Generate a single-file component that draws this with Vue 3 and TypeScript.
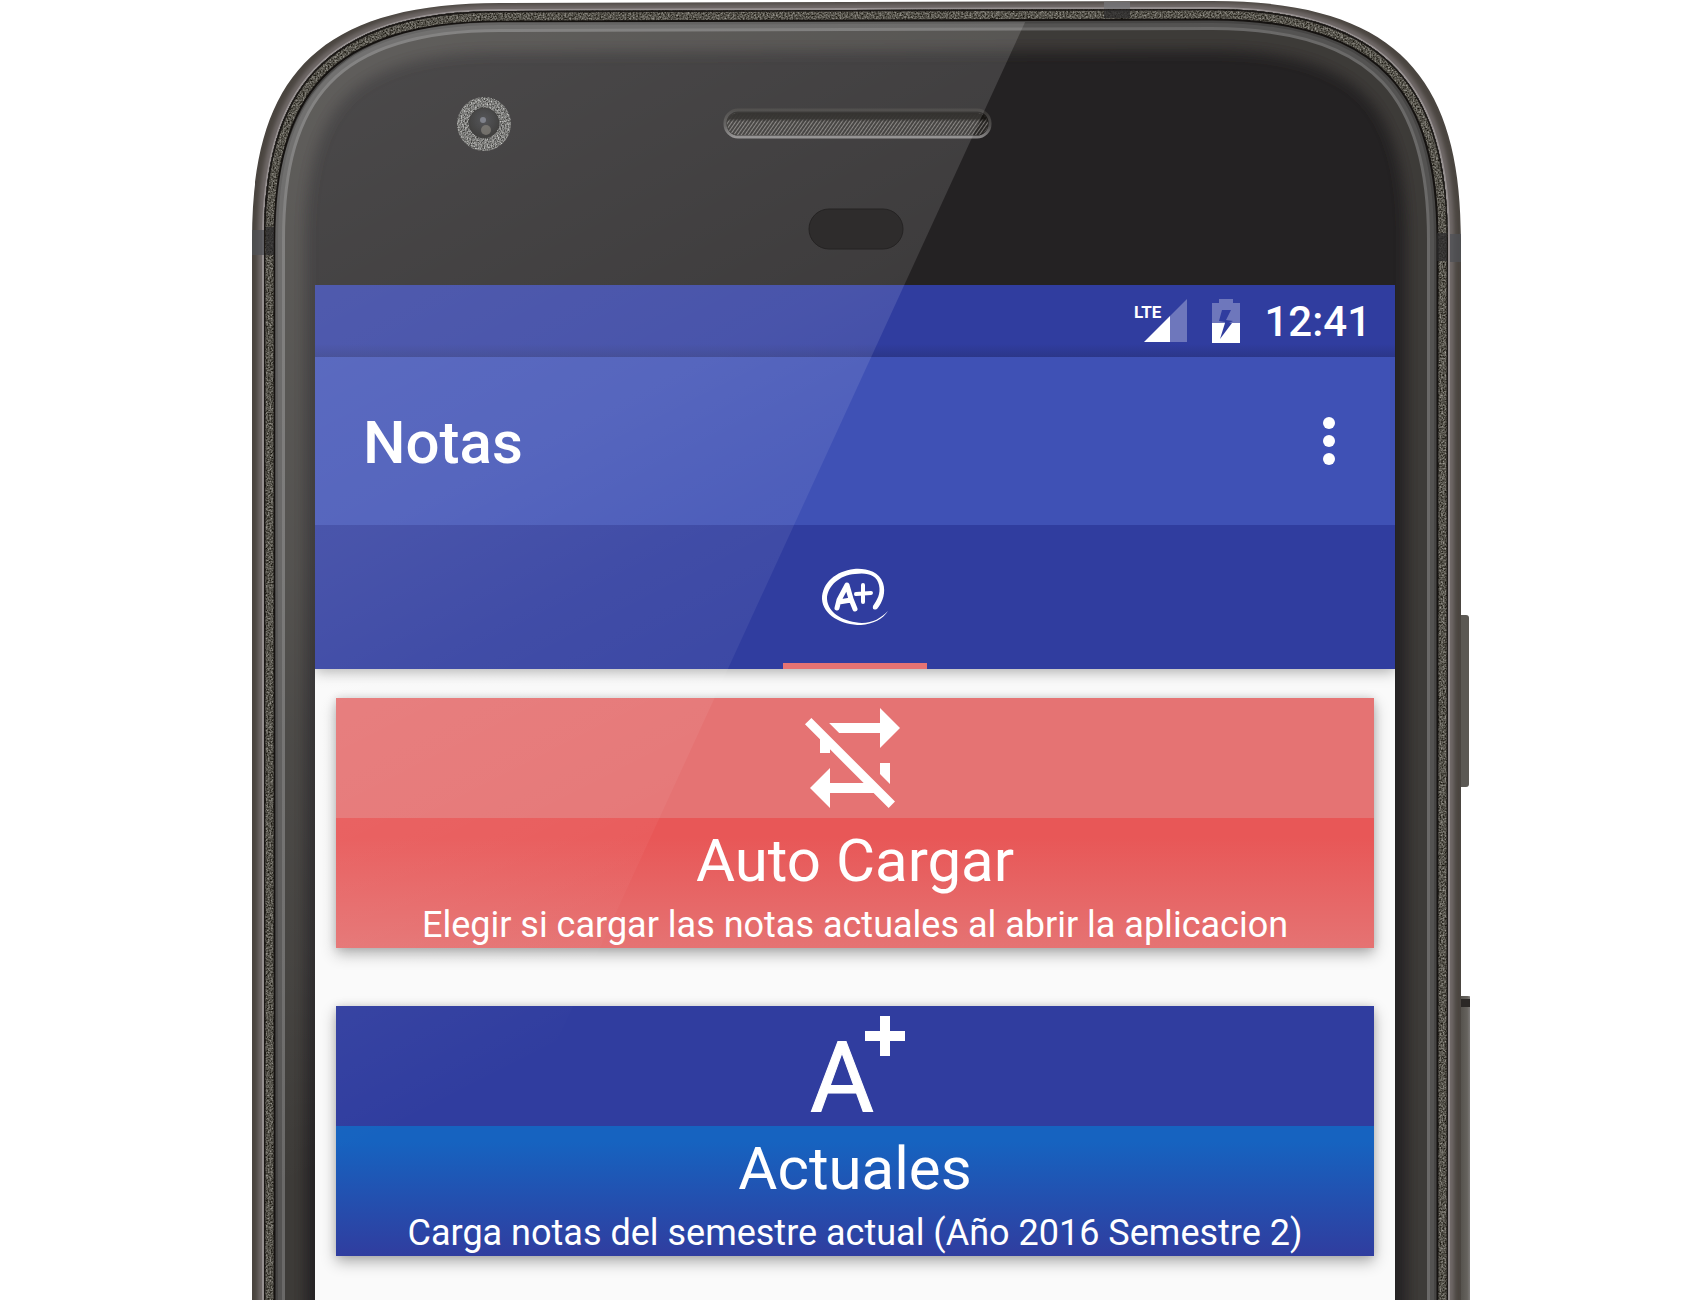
<script setup lang="ts">
interface Card {
  id: string
  title: string
  detail: string
  icon: 'repeat-off' | 'grade'
}

const cards: Card[] = [
  {
    id: 'auto',
    title: 'Auto Cargar',
    detail: 'Elegir si cargar las notas actuales al abrir la aplicacion',
    icon: 'repeat-off',
  },
  {
    id: 'current',
    title: 'Actuales',
    detail: 'Carga notas del semestre actual (Año 2016 Semestre 2)',
    icon: 'grade',
  },
]
</script>

<template>
  <div class="page">
    <div class="phone">
      <svg class="shell" viewBox="240 0 1230 1300" aria-hidden="true">
        <defs>
          <path id="outer" d="M252 1400V240C252 82 312 3 500 3L1213 1C1401 1 1461 82 1461 240V1400Z" />
          <path id="inner" d="M264 1400V240C264 92 322 11 500 11L1212 9C1390 9 1448 92 1448 240V1400Z" />
          <clipPath id="outerClip"><use href="#outer" /></clipPath>
          <clipPath id="innerClip"><use href="#inner" /></clipPath>
          <filter id="soft" x="-5%" y="-5%" width="110%" height="110%">
            <feGaussianBlur stdDeviation="2" />
          </filter>
          <filter id="glow" x="-5%" y="-5%" width="110%" height="110%">
            <feGaussianBlur stdDeviation="7" />
          </filter>
          <filter id="grain" x="0" y="0" width="100%" height="100%" color-interpolation-filters="sRGB">
            <feTurbulence type="fractalNoise" baseFrequency="0.6" numOctaves="2" seed="4" result="noise" />
            <feColorMatrix in="noise" type="matrix" values="0.8 0 0 0 -0.06  0.8 0 0 0 -0.07  0.8 0 0 0 -0.1  0 0 0 0 1" />
            <feComposite in2="SourceGraphic" operator="in" />
          </filter>
          <filter id="ringGrain" x="0" y="0" width="100%" height="100%" color-interpolation-filters="sRGB">
            <feTurbulence type="fractalNoise" baseFrequency="0.7" numOctaves="2" seed="9" result="noise" />
            <feColorMatrix in="noise" type="matrix" values="1.1 0 0 0 -0.15  1.1 0 0 0 -0.15  1.1 0 0 0 -0.16  0 0 0 0 1" />
            <feComposite in2="SourceGraphic" operator="in" />
          </filter>
          <pattern id="mesh" width="3" height="3" patternUnits="userSpaceOnUse" patternTransform="rotate(35)">
            <rect width="3" height="3" fill="#2a2826" />
            <rect width="1" height="3" fill="#7a7774" />
          </pattern>
          <linearGradient id="meshShade" x1="0" y1="0" x2="0" y2="1">
            <stop offset="0" stop-color="#14120f" />
            <stop offset="0.25" stop-color="#14120f" stop-opacity="0.9" />
            <stop offset="0.4" stop-color="#14120f" stop-opacity="0" />
          </linearGradient>
          <linearGradient id="speakerRim" x1="0" y1="0" x2="0" y2="1">
            <stop offset="0" stop-color="#353331" />
            <stop offset="0.6" stop-color="#504e4d" />
            <stop offset="1" stop-color="#858383" />
          </linearGradient>
          <radialGradient id="lens" cx="0.5" cy="0.4" r="0.6">
            <stop offset="0" stop-color="#35363a" />
            <stop offset="1" stop-color="#1b1a18" />
          </radialGradient>
          <linearGradient id="keyTone" x1="0" y1="0" x2="1" y2="0">
            <stop offset="0" stop-color="#4a4742" />
            <stop offset="0.7" stop-color="#65625d" />
            <stop offset="1" stop-color="#8d8b8c" />
          </linearGradient>
        </defs>

        <rect x="1456" y="615" width="13" height="172" rx="3" fill="#5c5954" />
        <rect x="1456" y="996" width="16" height="404" rx="4" fill="url(#keyTone)" />
        <rect x="1461" y="999" width="9" height="8" fill="#2b2826" />

        <use href="#outer" fill="#4a4540" />
        <g clip-path="url(#outerClip)">
          <use href="#inner" fill="none" stroke="#716b69" stroke-width="12" filter="url(#soft)" />
          <use href="#inner" fill="none" stroke="#969090" stroke-width="4" />
        </g>
        <g clip-path="url(#innerClip)">
          <use href="#inner" fill="#242223" />
          <use href="#inner" fill="none" stroke="#3c3a38" stroke-width="82" filter="url(#glow)" />
          <use href="#inner" fill="none" stroke="#6a6968" stroke-width="42" />
          <use href="#inner" fill="none" stroke="#545352" stroke-width="36" />
          <use href="#inner" fill="none" stroke="#464544" stroke-width="28" />
          <use href="#inner" fill="none" stroke="#151210" stroke-width="23" />
          <use href="#inner" fill="none" stroke="#55524c" stroke-width="19" filter="url(#grain)" />
          <use href="#inner" fill="none" stroke="#1a1715" stroke-width="3" />
        </g>
        <g opacity="0.75">
          <rect x="252" y="230" width="12" height="25" fill="#4f5156" />
          <rect x="266" y="227" width="8" height="28" fill="#2b2a2b" />
          <rect x="1437" y="233" width="10" height="28" fill="#2b2a2b" />
          <rect x="1450" y="234" width="11" height="28" fill="#4f5156" />
          <rect x="1104" y="2" width="26" height="7" fill="#77777a" />
          <rect x="1104" y="10" width="26" height="8" fill="#2b2a2b" />
        </g>

        <circle cx="484" cy="124" r="27" fill="#777" filter="url(#ringGrain)" />
        <circle cx="484" cy="123" r="15" fill="url(#lens)" stroke="#1d1c1b" stroke-width="1" />
        <circle cx="483" cy="120" r="3" fill="#8a90a0" opacity="0.6" />
        <circle cx="486" cy="130" r="5" fill="#8d877c" opacity="0.5" />

        <rect x="725" y="110" width="265" height="27" rx="13" fill="#1a1816" stroke="url(#speakerRim)" stroke-width="3" />
        <rect x="727" y="113" width="261" height="22" rx="11" fill="url(#mesh)" />
        <rect x="727" y="113" width="261" height="22" rx="11" fill="url(#meshShade)" />
      </svg>

      <main class="screen">
        <header class="top">
          <div class="status">
            <svg class="signal" viewBox="0 0 54 44" role="img" aria-label="LTE">
              <text x="0" y="19" class="lte">LTE</text>
              <path d="M53 0V43H36V17Z" fill="#fff" opacity="0.3" />
              <path d="M36 17V43H10Z" fill="#fff" />
            </svg>
            <svg class="battery" viewBox="0 0 28 44" aria-hidden="true">
              <path d="M7 0H21V4H28V24H17L21 22L14 21L19 11H10L7 22L13 23V24H0V4H7Z" fill="#fff" opacity="0.3" />
              <path d="M0 24H13L8 40L20 24H28V44H0Z" fill="#fff" />
            </svg>
            <time class="clock">12:41</time>
          </div>
          <div class="toolbar">
            <h1 class="heading">Notas</h1>
            <button class="more" type="button" aria-label="Más opciones">
              <svg viewBox="0 0 12 48" aria-hidden="true">
                <circle cx="6" cy="6" r="6" />
                <circle cx="6" cy="24" r="6" />
                <circle cx="6" cy="42" r="6" />
              </svg>
            </button>
          </div>
          <nav class="tabs">
            <button class="tab" type="button" aria-label="Notas" aria-current="page">
              <svg viewBox="0 0 72 72" aria-hidden="true">
                <path
                  fill="#fff"
                  d="M58 48C64 41 67 31 64 22C60 10 46 7 35 8C17 10 3 22 3 38C4 54 22 64 42 64C54 63 64 58 69 50C62 57 54 62 43 62C26 61 9 53 8 38C8 25 21 14 36 13C48 11 58 14 60 24C62 33 58 39 54 45Q53 50 58 48Z"
                />
                <g fill="none" stroke="#fff" stroke-width="5" stroke-linecap="round" stroke-linejoin="round">
                  <path d="M18 47L20 39L28 24L32 38L36 48M20 41L32 39" />
                  <path d="M44 24V41M37 33L52 32" stroke-width="4" />
                </g>
              </svg>
            </button>
          </nav>
        </header>

        <section class="cards">
          <button v-for="card in cards" :key="card.id" type="button" class="card" :class="card.id">
            <span class="banner">
              <svg v-if="card.icon === 'repeat-off'" viewBox="0 0 24 24" aria-hidden="true">
                <path
                  fill="#fff"
                  d="M2,5.27L3.28,4L20,20.72L18.73,22L15.73,19H7V22L3,18L7,14V17H13.73L7,10.27V11H5V8.27L2,5.27M17,13H19V17.18L17,15.18V13M17,5V2L21,6L17,10V7H8.82L6.82,5H17Z"
                />
              </svg>
              <svg v-else viewBox="0 0 120 120" aria-hidden="true">
                <text x="47" y="105" class="letter">A</text>
                <path fill="#fff" d="M85 10H95V25H110V35H95V50H85V35H70V25H85Z" />
              </svg>
            </span>
            <span class="info">
              <span class="title">{{ card.title }}</span>
              <span class="detail">{{ card.detail }}</span>
            </span>
          </button>
        </section>
      </main>

      <!-- glass reflection and proximity sensor sit over the display -->
      <svg class="shine" viewBox="240 0 1230 1300" aria-hidden="true">
        <defs>
          <clipPath id="glassClip">
            <path d="M275 1300V240C275 104 330 22 500 22H1212C1380 22 1437 104 1437 240V1300Z" />
          </clipPath>
          <linearGradient id="reflect" gradientUnits="userSpaceOnUse" x1="300" y1="60" x2="752" y2="953">
            <stop offset="0" stop-color="#fff" stop-opacity="0.18" />
            <stop offset="0.45" stop-color="#fff" stop-opacity="0.12" />
            <stop offset="0.6" stop-color="#fff" stop-opacity="0.08" />
            <stop offset="0.8" stop-color="#fff" stop-opacity="0.05" />
            <stop offset="1" stop-color="#fff" stop-opacity="0" />
          </linearGradient>
        </defs>
        <path d="M270 20H1026L438 1300H270Z" fill="url(#reflect)" clip-path="url(#glassClip)" />
        <rect x="809" y="209" width="94" height="40" rx="20" fill="#2e2c2c" stroke="#252323" stroke-width="1" />
      </svg>
    </div>
  </div>
</template>

<style>
body {
  margin: 0;
  background: #fff;
}
</style>

<style scoped>
.page {
  display: flex;
  justify-content: center;
  box-sizing: border-box;
  height: 100vh;
  padding-left: 10px;
  overflow: hidden;
  font-family: Roboto, 'Noto Sans', sans-serif;
  color: #fff;
}

.phone {
  position: relative;
  display: flex;
  flex: 0 1 1230px;
  box-sizing: border-box;
  padding: 285px 75px 0;
}

.shell,
.shine {
  position: absolute;
  top: 0;
  left: 0;
  width: 100%;
  pointer-events: none;
}

.screen {
  position: relative;
  flex: 1;
  min-width: 0;
  background: #fafafa;
  overflow: hidden;
}

.top {
  position: relative;
  box-shadow: 0 2px 14px rgba(0, 0, 0, 0.35);
}

.status {
  display: flex;
  align-items: center;
  justify-content: flex-end;
  gap: 24px;
  height: 72px;
  box-sizing: border-box;
  padding-right: 24px;
  background: linear-gradient(#303d9f 82%, #2b3689);
}

.signal {
  width: 54px;
  height: 44px;
  overflow: visible;
}

.battery {
  width: 28px;
  height: 44px;
}

.lte {
  font-size: 17px;
  font-weight: 700;
  fill: #fff;
}

.clock {
  padding-top: 2px;
  font-size: 42px;
  font-weight: 500;
  line-height: 60px;
}

.toolbar {
  display: flex;
  align-items: center;
  justify-content: space-between;
  height: 168px;
  box-sizing: border-box;
  padding: 0 36px 0 48px;
  background: #3f51b5;
}

.heading {
  margin: 0;
  padding-top: 4px;
  font-size: 60px;
  font-weight: 500;
  line-height: 72px;
}

button {
  border: 0;
  margin: 0;
  padding: 0;
  background: none;
  color: inherit;
  font: inherit;
}

.more {
  display: flex;
  align-items: center;
  justify-content: center;
  width: 60px;
  height: 96px;
}

.more svg {
  width: 12px;
  height: 48px;
  fill: #fff;
}

.tabs {
  display: flex;
  justify-content: center;
  height: 144px;
  background: #303d9f;
}

.tab {
  width: 144px;
  box-sizing: border-box;
  border-top: 6px solid transparent;
  border-bottom: 6px solid #e57373;
}

.tab svg {
  display: block;
  width: 72px;
  height: 72px;
  margin: 0 auto;
}

.cards {
  display: flex;
  flex-direction: column;
  gap: 58px;
  padding: 29px 21px;
}

.card {
  display: flex;
  flex-direction: column;
  text-align: center;
  box-shadow: 0 6px 14px rgba(0, 0, 0, 0.3), 0 0 8px rgba(0, 0, 0, 0.12);
}

.banner {
  display: flex;
  justify-content: center;
  width: 100%;
}

.banner svg {
  width: 120px;
  height: 120px;
  overflow: visible;
}

.letter {
  font-size: 98px;
  font-weight: 400;
  text-anchor: middle;
  fill: #fff;
  stroke: #fff;
  stroke-width: 1px;
}

.info {
  display: flex;
  flex-direction: column;
  gap: 7px;
  width: 100%;
  box-sizing: border-box;
  height: 130px;
  padding-top: 7px;
}

.title {
  font-size: 60px;
  line-height: 72px;
}

.detail {
  font-size: 36px;
  line-height: 42px;
}

.auto .banner {
  background: #e57373;
}

.auto .info {
  background: linear-gradient(#e85757 15%, #e57373);
}

.current .banner {
  background: #303d9f;
}

.current .info {
  background: linear-gradient(#1663c0 12%, #303d9f);
}
</style>
